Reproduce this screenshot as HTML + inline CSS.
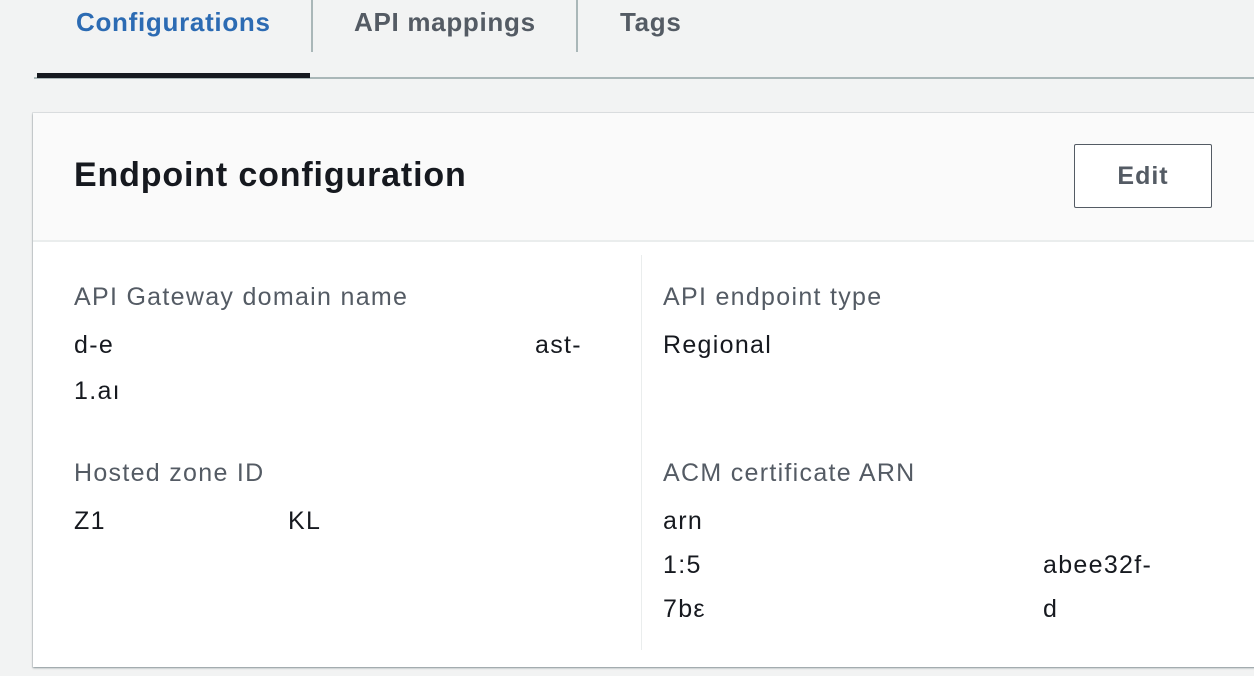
<!DOCTYPE html>
<html><head><style>
body{margin:0;width:1254px;height:676px;background:#f2f3f3;font-family:"Liberation Sans",sans-serif;position:relative;overflow:hidden}
.a{position:absolute;white-space:nowrap}
.tab{font-weight:bold;font-size:26px;letter-spacing:0.7px;color:#545b64;top:7px}
.lbl{font-size:25px;letter-spacing:1.3px;color:#545b64}
.val{font-size:25px;letter-spacing:1.3px;color:#16191f}
</style></head><body>
<div class="a tab" style="left:76px;color:#2c6bb3">Configurations</div>
<div class="a" style="left:311px;top:0;width:2px;height:52px;background:#aab7b8"></div>
<div class="a tab" style="left:354px">API mappings</div>
<div class="a" style="left:576px;top:0;width:2px;height:52px;background:#aab7b8"></div>
<div class="a tab" style="left:620px">Tags</div>
<div class="a" style="left:34px;top:77px;width:1220px;height:2px;background:#aab7b8"></div>
<div class="a" style="left:37px;top:73px;width:273px;height:5px;background:#16191f"></div>
<div class="a" style="left:33px;top:113px;width:1230px;height:554px;background:#fff;box-shadow:0 1px 2px rgba(0,28,36,.4),0 0 0 1px #e0e3e4"></div>
<div class="a" style="left:33px;top:113px;width:1230px;height:127px;background:#fafafa;border-bottom:2px solid #eaeded"></div>
<div class="a" style="left:74px;top:156px;font-size:34px;letter-spacing:0.85px;font-weight:bold;color:#16191f">Endpoint configuration</div>
<div class="a" style="left:1074px;top:144px;width:136px;height:62px;border:1px solid #545b64;border-radius:2px;background:#fff;font-size:25px;letter-spacing:1px;font-weight:bold;color:#545b64;text-align:center;line-height:62px">Edit</div>
<div class="a" style="left:641px;top:255px;width:1px;height:395px;background:#eaeded"></div>
<div class="a lbl" style="left:74px;top:283px">API Gateway domain name</div>
<div class="a val" style="left:74px;top:331px">d-e</div>
<div class="a val" style="left:535px;top:331px">ast-</div>
<div class="a val" style="left:74px;top:377px">1.aı</div>
<div class="a lbl" style="left:74px;top:459px">Hosted zone ID</div>
<div class="a val" style="left:74px;top:507px">Z1</div>
<div class="a val" style="left:288px;top:507px">KL</div>
<div class="a lbl" style="left:663px;top:283px">API endpoint type</div>
<div class="a val" style="left:663px;top:331px">Regional</div>
<div class="a lbl" style="left:663px;top:459px">ACM certificate ARN</div>
<div class="a val" style="left:663px;top:507px">arn</div>
<div class="a val" style="left:663px;top:551px">1:5</div>
<div class="a val" style="left:1043px;top:551px">abee32f-</div>
<div class="a val" style="left:663px;top:595px">7bε</div>
<div class="a val" style="left:1043px;top:595px">d</div>
</body></html>
